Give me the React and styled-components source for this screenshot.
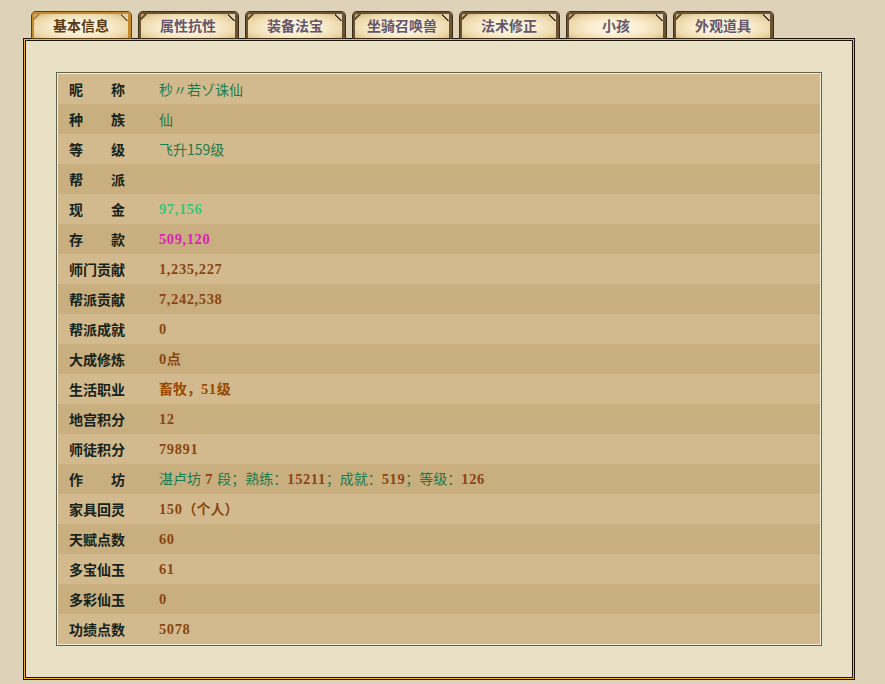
import React from "react";
import styled, { createGlobalStyle } from "styled-components";

const GlobalStyle = createGlobalStyle`
	html, body {
		margin: 0;
		padding: 0;
		background: #ded2b8;
	}
	body {
		font-family: "Noto Sans CJK SC", "Liberation Sans", sans-serif;
	}
`;

const tabs = ["基本信息", "属性抗性", "装备法宝", "坐骑召唤兽", "法术修正", "小孩", "外观道具"];

const GREEN = "#1b7b4c";
const BROWN = "#8a4612";

const rows = [
	{ label: "昵称", value: [{ t: "秒〃若ゾ诛仙", c: GREEN }] },
	{ label: "种族", value: [{ t: "仙", c: GREEN }] },
	{ label: "等级", value: [{ t: "飞升159级", c: GREEN }] },
	{ label: "帮派", value: [] },
	{ label: "现金", value: [{ t: "97,156", c: "#34c878", num: true }] },
	{ label: "存款", value: [{ t: "509,120", c: "#dc22b8", num: true }] },
	{ label: "师门贡献", value: [{ t: "1,235,227", c: BROWN, num: true }] },
	{ label: "帮派贡献", value: [{ t: "7,242,538", c: BROWN, num: true }] },
	{ label: "帮派成就", value: [{ t: "0", c: BROWN, num: true }] },
	{ label: "大成修炼", value: [{ t: "0", c: BROWN, num: true }, { t: "点", c: BROWN, bold: true }] },
	{
		label: "生活职业",
		value: [
			{ t: "畜牧，", c: "#9a4800", bold: true },
			{ t: "51", c: "#9a4800", num: true },
			{ t: "级", c: "#9a4800", bold: true },
		],
	},
	{ label: "地宫积分", value: [{ t: "12", c: BROWN, num: true }] },
	{ label: "师徒积分", value: [{ t: "79891", c: BROWN, num: true }] },
	{
		label: "作坊",
		value: [
			{ t: "湛卢坊", c: GREEN },
			{ t: " 7 ", c: BROWN, num: true },
			{ t: "段；熟练：", c: GREEN },
			{ t: "15211", c: BROWN, num: true },
			{ t: "；成就：", c: GREEN },
			{ t: "519", c: BROWN, num: true },
			{ t: "；等级：", c: GREEN },
			{ t: "126", c: BROWN, num: true },
		],
	},
	{
		label: "家具回灵",
		value: [
			{ t: "150", c: BROWN, num: true },
			{ t: "（个人）", c: BROWN, bold: true },
		],
	},
	{ label: "天赋点数", value: [{ t: "60", c: BROWN, num: true }] },
	{ label: "多宝仙玉", value: [{ t: "61", c: BROWN, num: true }] },
	{ label: "多彩仙玉", value: [{ t: "0", c: BROWN, num: true }] },
	{ label: "功绩点数", value: [{ t: "5078", c: BROWN, num: true }] },
];

function App() {
	return (
		<Page>
			<GlobalStyle />
			<TabBar>
				{tabs.map((name, i) => (
					<Tab key={name} $active={i === 0}>
						{name}
					</Tab>
				))}
			</TabBar>
			<Panel>
				<TableBox>
					<Rows>
						{rows.map((row, i) => (
							<Row key={row.label} $odd={i % 2 === 0}>
								<Label>
									{row.label.split("").map((ch, j) => (
										<span key={j}>{ch}</span>
									))}
								</Label>
								<Value>
									{row.value.map((v, j) =>
										v.num ? (
											<Num key={j} $color={v.c}>
												{v.t}
											</Num>
										) : (
											<Txt key={j} $color={v.c} $bold={v.bold}>
												{v.t}
											</Txt>
										)
									)}
								</Value>
							</Row>
						))}
					</Rows>
				</TableBox>
			</Panel>
		</Page>
	);
}

const Page = styled.div`
	padding: 12px 0 0 23px;
	height: 684px;
	box-sizing: border-box;
`;

const TabBar = styled.div`
	display: flex;
	gap: 8px;
	padding-left: 9px;
	height: 26px;
`;

const Tab = styled.div`
	position: relative;
	width: 99px;
	height: 26px;
	box-sizing: border-box;
	padding-bottom: 3px;
	border: 2px solid ${(p) => (p.$active ? "#c48a2a" : "#6b5232")};
	border-bottom: none;
	border-right-width: 3px;
	border-radius: 4px 4px 0 0;
	box-shadow: ${(p) => (p.$active ? "0 0 0 1px #5e3f12" : "0 0 0 1px #3f2e16")};
	background: radial-gradient(
		ellipse at 50% 55%,
		#fff9e8 0%,
		#fbefd2 40%,
		#ecd7a8 75%,
		#cdb07a 100%
	);
	display: flex;
	align-items: center;
	justify-content: center;
	font-size: 14px;
	font-weight: 700;
	line-height: 1;
	color: ${(p) => (p.$active ? "#5a3a12" : "#66566a")};
	&::before {
		content: "";
		position: absolute;
		top: -1px;
		left: -1px;
		width: 7px;
		height: 7px;
		background: linear-gradient(
			135deg,
			transparent 40%,
			${(p) => (p.$active ? "#c48a2a" : "#6b5232")} 40%,
			${(p) => (p.$active ? "#c48a2a" : "#6b5232")} 58%,
			transparent 58%
		);
	}
	&::after {
		content: "";
		position: absolute;
		top: 0;
		right: 0;
		width: 7px;
		height: 7px;
		background: linear-gradient(
			225deg,
			#ded2b8 45%,
			${(p) => (p.$active ? "#8a5e1c" : "#4a3a20")} 45%,
			${(p) => (p.$active ? "#8a5e1c" : "#4a3a20")} 58%,
			#e6d2a4 58%
		);
	}
`;

const Panel = styled.div`
	width: 832px;
	height: 642px;
	box-sizing: border-box;
	border: 1px solid #1c1408;
	box-shadow: inset 0 0 0 1px #f2b236, inset 0 0 0 2px #1c1408;
	background: #e9e1c5;
	padding: 33px 32px 0 32px;
`;

const TableBox = styled.div`
	border: 1px solid #5e6450;
	padding: 1px;
	background: #f4efdc;
`;

const Rows = styled.div`
	display: flex;
	flex-direction: column;
`;

const Row = styled.div`
	display: grid;
	grid-template-columns: 90px 1fr;
	align-items: center;
	height: 30px;
	padding-left: 11px;
	background: ${(p) => (p.$odd ? "#d3ba8e" : "#c9ae7f")};
`;

const Label = styled.div`
	width: 56px;
	display: flex;
	justify-content: space-between;
	font-size: 14px;
	font-weight: 700;
	color: #15231a;
	line-height: 1;
`;

const Value = styled.div`
	display: flex;
	align-items: baseline;
	white-space: pre;
	line-height: 1;
`;

const Txt = styled.span`
	font-family: "Noto Sans CJK SC", sans-serif;
	font-size: 14px;
	font-weight: ${(p) => (p.$bold ? 700 : 400)};
	color: ${(p) => p.$color};
`;

const Num = styled.span`
	font-family: "Liberation Serif", serif;
	font-size: 14.5px;
	letter-spacing: 0.6px;
	font-weight: 700;
	color: ${(p) => p.$color};
`;

export default App;
